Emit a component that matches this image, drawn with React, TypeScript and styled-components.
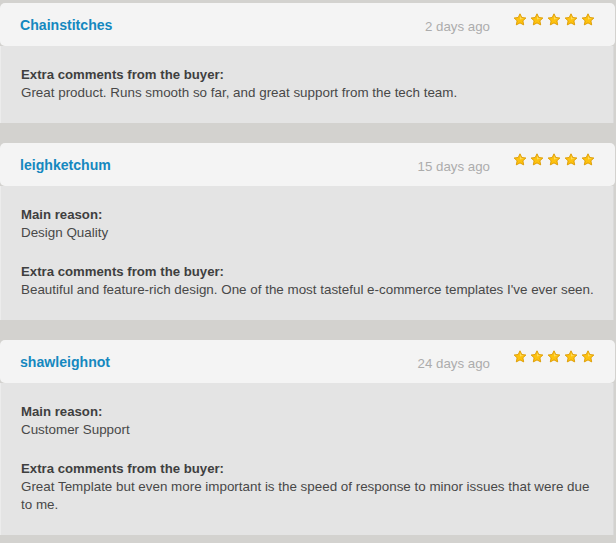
import React from "react";
import styled, { createGlobalStyle } from "styled-components";

const GlobalStyle = createGlobalStyle`
  html, body {
    margin: 0;
    padding: 0;
    background: #d3d2cf;
    font-family: "Liberation Sans", Arial, sans-serif;
  }
`;

const Page = styled.div`
  display: flex;
  flex-direction: column;
  gap: 20px;
  padding: 3px 1px 8px 0;
`;

const Card = styled.div`
  display: flex;
  flex-direction: column;
`;

const Header = styled.div`
  display: flex;
  align-items: center;
  height: 43px;
  padding: 0 20px;
  background: #f4f4f4;
  border-radius: 5px;
`;

const Name = styled.a`
  flex: 1;
  font-size: 14.1px;
  font-weight: bold;
  color: #1588bf;
  text-decoration: none;
`;

const Date = styled.span`
  margin-top: 4px;
  margin-right: 23px;
  font-size: 13.3px;
  color: #acacac;
`;

const Stars = styled.div`
  align-self: flex-start;
  display: flex;
  gap: 3px;
  margin-top: 10px;
`;

const Body = styled.div`
  display: flex;
  flex-direction: column;
  gap: 21px;
  margin-right: 1px;
  padding: 20px 6px 21px 20px;
  background: #e4e4e4;
  border-left: 1px solid #ececec;
  border-right: 1px solid #d9d9d9;
`;

const Block = styled.div`
  font-size: 13.4px;
  line-height: 18px;
  color: #484848;
`;

const Label = styled.div`
  font-size: 13.2px;
  font-weight: bold;
  color: #3f3f3f;
`;

const Star = () => (
  <svg width="14" height="13" viewBox="0 0 14 13">
    <path
      d="M7 0.8 L8.8 4.5 L12.9 5 L9.9 7.8 L10.7 11.9 L7 9.9 L3.3 11.9 L4.1 7.8 L1.1 5 L5.2 4.5 Z"
      fill="#fdc20f"
      stroke="#dc9a00"
      strokeWidth="0.9"
      strokeLinejoin="round"
    />
    <path d="M7 2.5 L8.2 5.2 L11 5.6 L7 6.5 Z" fill="#ffe680" opacity="0.7" />
  </svg>
);

type Section = { label: string; text: React.ReactNode };

type Review = { name: string; date: string; sections: Section[] };

const reviews: Review[] = [
  {
    name: "Chainstitches",
    date: "2 days ago",
    sections: [
      {
        label: "Extra comments from the buyer:",
        text: "Great product. Runs smooth so far, and great support from the tech team.",
      },
    ],
  },
  {
    name: "leighketchum",
    date: "15 days ago",
    sections: [
      { label: "Main reason:", text: "Design Quality" },
      {
        label: "Extra comments from the buyer:",
        text: "Beautiful and feature-rich design. One of the most tasteful e-commerce templates I've ever seen.",
      },
    ],
  },
  {
    name: "shawleighnot",
    date: "24 days ago",
    sections: [
      { label: "Main reason:", text: "Customer Support" },
      {
        label: "Extra comments from the buyer:",
        text: (
          <>
            Great Template but even more important is the speed of response to minor issues that were due
            <br />
            to me.
          </>
        ),
      },
    ],
  },
];

export default function App() {
  return (
    <>
      <GlobalStyle />
      <Page>
        {reviews.map((r) => (
          <Card key={r.name}>
            <Header>
              <Name href="#">{r.name}</Name>
              <Date>{r.date}</Date>
              <Stars>
                {[0, 1, 2, 3, 4].map((i) => (
                  <Star key={i} />
                ))}
              </Stars>
            </Header>
            <Body>
              {r.sections.map((s) => (
                <Block key={s.label}>
                  <Label>{s.label}</Label>
                  <div>{s.text}</div>
                </Block>
              ))}
            </Body>
          </Card>
        ))}
      </Page>
    </>
  );
}
